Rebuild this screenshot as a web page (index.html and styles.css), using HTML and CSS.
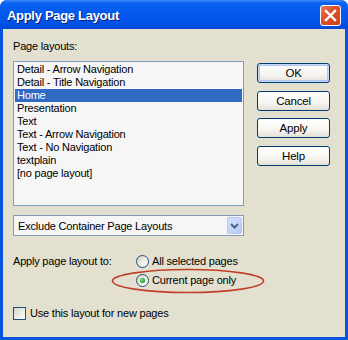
FILE: index.html
```html
<!DOCTYPE html>
<html lang="en">
<head>
<meta charset="UTF-8">
<title>Apply Page Layout</title>
<link rel="stylesheet" href="styles.css">
</head>
<body>
<div class="window">
    <div class="titlebar">
        <span class="title">Apply Page Layout</span>
        <span class="close">
            <svg width="21" height="21" viewBox="0 0 21 21"><path d="M6 6L15 15M15 6L6 15" stroke="#fff" stroke-width="2.4" stroke-linecap="square"/></svg>
        </span>
    </div>
    <div class="client">
        <div class="top">
            <div class="left">
                <div class="label">Page layouts:</div>
                <ul class="listbox">
                    <li>Detail - Arrow Navigation</li>
                    <li>Detail - Title Navigation</li>
                    <li class="selected">Home</li>
                    <li>Presentation</li>
                    <li>Text</li>
                    <li>Text - Arrow Navigation</li>
                    <li>Text - No Navigation</li>
                    <li>textplain</li>
                    <li>[no page layout]</li>
                </ul>
                <div class="combo">
                    <span class="combo-text">Exclude Container Page Layouts</span>
                    <span class="combo-btn">
                        <svg width="9" height="6" viewBox="0 0 9 6"><path d="M1 1L4.5 4.5L8 1" fill="none" stroke="#4d6185" stroke-width="2"/></svg>
                    </span>
                </div>
            </div>
            <div class="buttons">
                <div class="btn default">OK</div>
                <div class="btn">Cancel</div>
                <div class="btn">Apply</div>
                <div class="btn">Help</div>
            </div>
        </div>

        <div class="apply-row">
            <div class="apply-label">Apply page layout to:</div>
            <div class="radios">
                <div class="radio-item"><span class="radio"></span>All selected pages</div>
                <div class="radio-item"><span class="radio checked"></span>Current page only</div>
            </div>
        </div>

        <div class="check-row"><span class="checkbox"></span>Use this layout for new pages</div>

        <!-- red annotation ring -->
        <svg class="ring" width="156" height="26" viewBox="0 0 156 26"><ellipse cx="78" cy="13" rx="75.5" ry="11.5" fill="none" stroke="#c2402a" stroke-width="1.6"/></svg>
    </div>
</div>
</body>
</html>
```

FILE: styles.css
```css
*{box-sizing:border-box;margin:0;padding:0;}
body{
    background:#fff;
    font-family:'Liberation Sans',Arial,sans-serif;
    font-size:11px;
    letter-spacing:-0.2px;
    color:#000;
}
.window{
    width:348px;
    height:340px;
    display:flex;
    flex-direction:column;
    background:#0853e0;
    border-radius:7px 7px 0 0;
}
.titlebar{
    height:29px;
    display:flex;
    align-items:center;
    justify-content:space-between;
    padding:0 7px 0 7px;
    border-radius:7px 7px 0 0;
    background:linear-gradient(#3d8cfb 0,#0a62f0 3px,#0359ee 45%,#0053e6 80%,#0349d6 100%);
}
.title{
    color:#fff;
    font-weight:bold;
    font-size:13px;
    letter-spacing:-0.3px;
    text-shadow:1px 1px 0 #0a1e80;
    margin-top:2px;
}
.close{
    width:21px;
    height:21px;
    border:1px solid #fff;
    border-radius:3px;
    background:linear-gradient(135deg,#ec7e5e 0,#e0512d 40%,#c9401e 100%);
    display:flex;
    margin-right:0;
    margin-top:2px;
}
.close svg{margin:-1px;}
.client{
    flex:1;
    margin:0 3px 3px 3px;
    background:#e3e0cf;
    padding:11px 0 0 10px;
    position:relative;
}
.top{
    display:flex;
    gap:13px;
}
.label{
    line-height:13px;
    margin-bottom:8px;
}
.listbox{
    list-style:none;
    width:231px;
    height:145px;
    border:1px solid #7f9db9;
    background:#f6f6f6;
    padding:1px;
}
.listbox li{
    line-height:13px;
    height:13px;
    padding-left:2px;
    white-space:nowrap;
}
.listbox li.selected{
    background:#316ac5;
    color:#fff;
}
.combo{
    width:231px;
    height:21px;
    margin-top:9px;
    border:1px solid #7f9db9;
    background:#f6f6f6;
    display:flex;
    align-items:center;
    justify-content:space-between;
    padding:1px;
}
.combo-text{padding-left:3px;}
.combo-btn{
    width:15px;
    height:17px;
    border:1px solid #b4c8f2;
    border-radius:2px;
    background:linear-gradient(135deg,#d6e2fd 0,#c2d4fb 60%,#b3c8f6 100%);
    display:flex;
    align-items:center;
    justify-content:center;
}
.buttons{
    display:flex;
    flex-direction:column;
    gap:7.5px;
    margin-top:23px;
}
.btn{
    width:73px;
    height:20px;
    border:1px solid #003c74;
    border-radius:3px;
    background:linear-gradient(#ffffff 0,#f6f5f0 60%,#e3e0d6 100%);
    display:flex;
    align-items:center;
    justify-content:center;
    font-size:11.5px;
}
.btn.default{
    box-shadow:inset 0 0 0 1px #c6d6f8,inset 0 0 0 2px #aec4f3;
}
.apply-row{
    display:flex;
    margin-top:19px;
}
.apply-label{
    width:123px;
    line-height:13px;
}
.radios{
    display:flex;
    flex-direction:column;
    gap:6px;
}
.radio-item{
    display:flex;
    align-items:center;
    gap:3px;
    line-height:13px;
}
.radio{
    width:13px;
    height:13px;
    border:1px solid #1c5180;
    border-radius:50%;
    background:linear-gradient(135deg,#d4d1c6 0,#ecebe4 50%,#fff 100%);
    position:relative;
}
.radio.checked::after{
    content:"";
    position:absolute;
    left:3px;
    top:3px;
    width:5px;
    height:5px;
    border-radius:50%;
    background:radial-gradient(circle at 40% 40%,#8ee28e 0,#21a121 60%,#1a8a1a 100%);
}
.check-row{
    display:flex;
    align-items:center;
    gap:4px;
    margin-top:19.5px;
    line-height:13px;
}
.checkbox{
    width:13px;
    height:13px;
    border:1px solid #1c5180;
    background:linear-gradient(135deg,#d4d1c6 0,#ecebe4 50%,#fff 100%);
}
.ring{
    position:absolute;
    left:107px;
    top:239px;
}
```
